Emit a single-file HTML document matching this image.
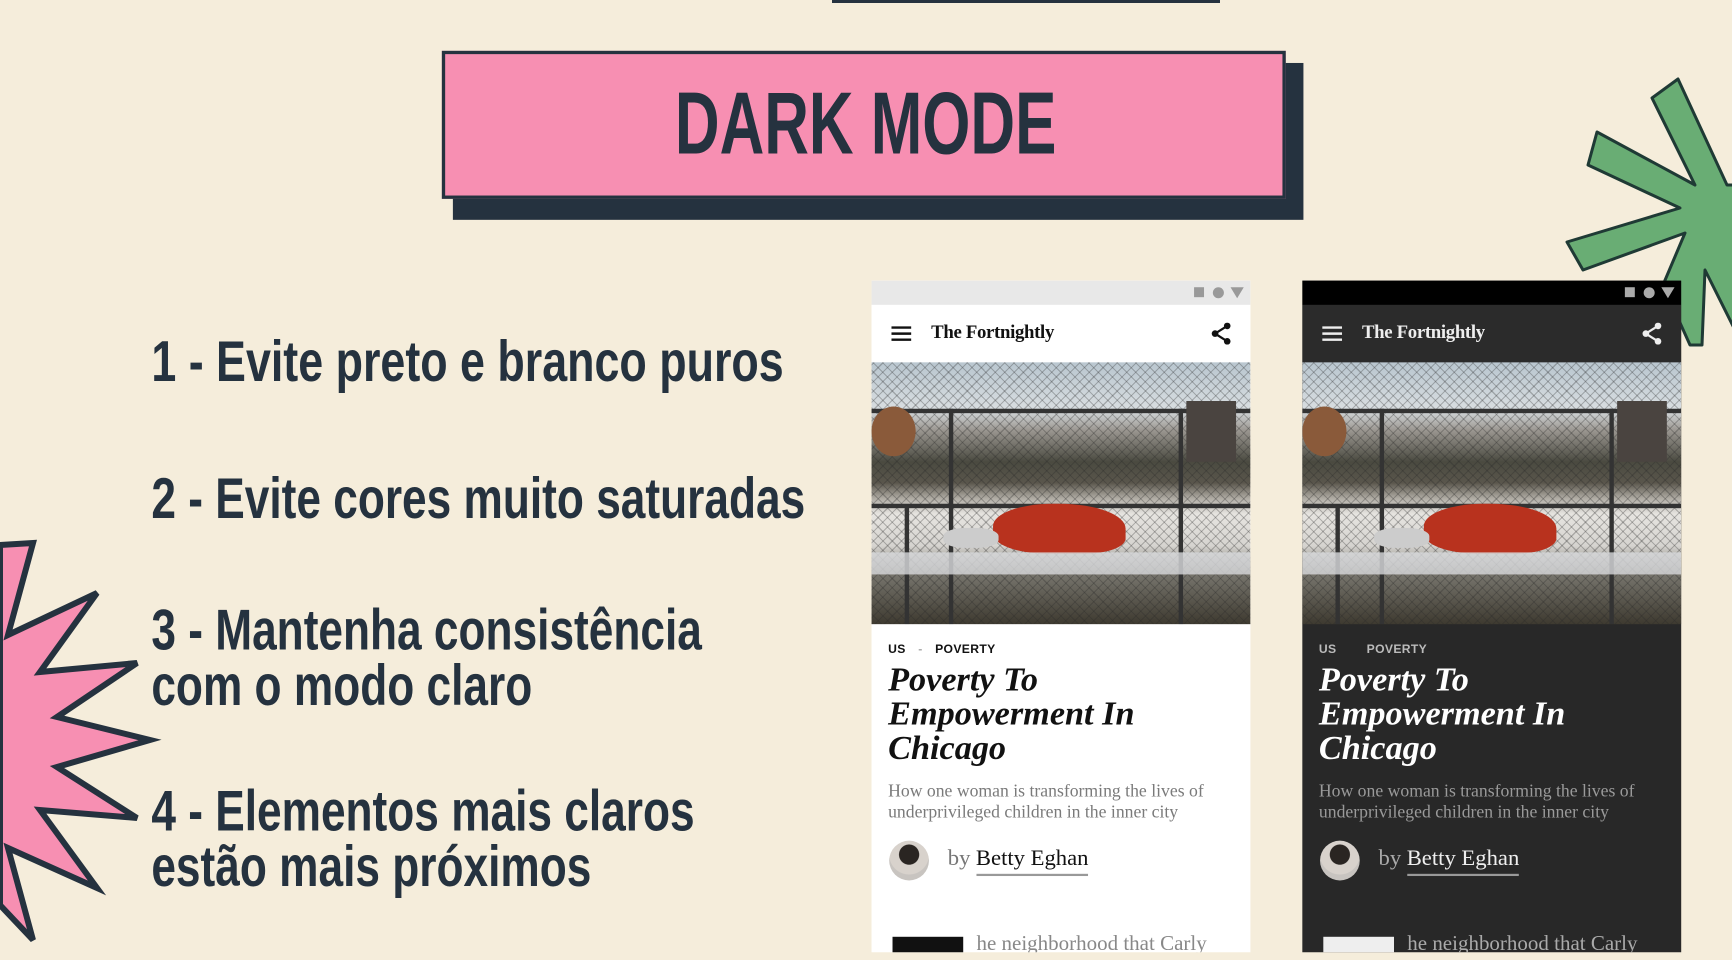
<!DOCTYPE html>
<html><head><meta charset="utf-8"><style>
*{margin:0;padding:0;box-sizing:border-box}
html,body{width:1732px;height:960px;overflow:hidden;background:#f5eddb}
#deco{position:absolute;left:0;top:0;z-index:1}
#w{position:absolute;left:0;top:0;width:1568px;height:869px;transform:scale(1.1046,1.1047);transform-origin:0 0;z-index:2}
.cond{font-family:"Liberation Sans Narrow","Liberation Sans",sans-serif;font-weight:bold;color:#25323f;white-space:nowrap;position:absolute;transform-origin:0 0}
.tshadow{position:absolute;left:410px;top:57px;width:770px;height:142px;background:#25323f}
.tbox{position:absolute;left:400px;top:46px;width:764px;height:134px;background:#f78fb2;border:3px solid #25323f}
.phone{position:absolute;top:254px;width:343px;height:608px;overflow:hidden;font-family:"Liberation Serif",serif}
.sb{height:22px;position:relative}
.sb i{position:absolute;top:6px}
.hd{height:52px;position:relative}
.img{height:237px;position:relative;overflow:hidden;
background:
linear-gradient(180deg,#b9c6cf 0%,#d8dde0 18%,#9a9690 26%,#4a4a40 38%,#5a564c 46%,#b0aca4 52%,#e6e4e0 58%,#d6d4d0 70%,#7a7870 80%,#3e3a30 100%)}
.fence{position:absolute;inset:0;background:
repeating-linear-gradient(45deg,rgba(40,40,40,.28) 0 1px,transparent 1px 6px),
repeating-linear-gradient(-45deg,rgba(40,40,40,.28) 0 1px,transparent 1px 6px)}
.tag{position:absolute;top:328px;left:15px;font:bold 11px "Liberation Sans",sans-serif;letter-spacing:.3px}
.tl{position:absolute;top:345px;left:15px;font:bold italic 31px/31px "Liberation Serif",serif}
.sub{position:absolute;top:453px;left:15px;font:16px/19px "Liberation Serif",serif;color:#7a7a7a;white-space:nowrap}
.av{position:absolute;left:16px;top:507px;width:36px;height:36px;border-radius:50%;background:radial-gradient(circle at 50% 35%,#2a2522 0 30%,#d8d2cc 32% 60%,#c8c4c0 62%)}
.by{position:absolute;left:69px;top:512px;font:20.5px "Liberation Serif",serif;white-space:nowrap}
.by span{border-bottom:2px solid #999;padding-bottom:3px}
.blk{position:absolute;left:19px;top:594px;width:64px;height:20px;background:#111}
.more{position:absolute;left:95px;top:590px;font:19px "Liberation Serif",serif;color:#888;white-space:nowrap}
</style></head><body>
<svg id="deco" width="1732" height="960">
<path d="M0,545 L33,543 L8,635 L97,593 L40,672 L137,663 L57,717 L150,740 L57,767 L137,818 L40,810 L97,888 L8,848 L33,940 L0,905 Z" fill="#f78fb2" stroke="#25323f" stroke-width="6" stroke-linejoin="miter"/>
<path d="M1652,98 L1678,79 L1727,185 L1740,185 L1740,340 L1705,270 L1702,345 L1690,345 L1663,285 L1685,233 L1583,270 L1567,242 L1680,208 L1588,165 L1597,132 L1695,185 Z" fill="#69ad74" stroke="#1f3a35" stroke-width="3" stroke-linejoin="round"/>
<rect x="832" y="0" width="388" height="3" fill="#25323f"/>
</svg>
<div id="w">
<div class="tshadow"></div>
<div class="tbox"></div>
<div class="cond" style="left:611px;top:72px;font-size:80px;line-height:80px;transform:scaleX(.70)">DARK MODE</div>

<div class="cond" style="left:137px;top:300px;font-size:52px;line-height:56px;transform:scaleX(.78)">1 - Evite preto e branco puros</div>
<div class="cond" style="left:137px;top:424px;font-size:52px;line-height:56px;transform:scaleX(.77)">2 - Evite cores muito saturadas</div>
<div class="cond" style="left:137px;top:546px;font-size:52px;line-height:50px;transform:scaleX(.77)">3 - Mantenha consistência<br>com o modo claro</div>
<div class="cond" style="left:137px;top:710px;font-size:52px;line-height:50px;transform:scaleX(.77)">4 - Elementos mais claros<br>estão mais próximos</div>

<!-- light phone -->
<div class="phone" style="left:789px;background:#fff;color:#111">
 <div class="sb" style="background:#e8e8e8"><i style="left:292px;width:9px;height:9px;background:#999"></i><i style="left:309px;width:10px;height:10px;border-radius:50%;background:#999"></i><i style="left:325px;width:0;height:0;border-left:6px solid transparent;border-right:6px solid transparent;border-top:10px solid #999"></i></div>
 <div class="hd" style="background:#fff">
  <svg style="position:absolute;left:18px;top:19px" width="18" height="14"><path d="M0,1.5H18M0,7H18M0,12.5H18" stroke="#111" stroke-width="2.2"/></svg>
  <div style="position:absolute;left:54px;top:15px;font:bold 17px 'Liberation Serif',serif;letter-spacing:-.3px">The Fortnightly</div>
  <svg style="position:absolute;left:307px;top:16px" width="20" height="20"><path d="M15,3 L4,10 L15,17" stroke="#111" stroke-width="2" fill="none"/><circle cx="15" cy="3" r="3" fill="#111"/><circle cx="4" cy="10" r="3" fill="#111"/><circle cx="15" cy="17" r="3" fill="#111"/></svg>
 </div>
 <div class="img"><div class="fence"></div>
  <div style="position:absolute;left:0;right:0;top:42px;height:4px;background:#333"></div>
  <div style="position:absolute;left:0;right:0;top:128px;height:4px;background:#333"></div>
  <div style="position:absolute;left:70px;top:42px;width:4px;height:195px;background:#333"></div>
  <div style="position:absolute;left:278px;top:42px;width:4px;height:195px;background:#333"></div>
  <div style="position:absolute;left:30px;top:130px;width:4px;height:107px;background:#333"></div>
  <div style="position:absolute;left:285px;top:35px;width:45px;height:55px;background:#4a4440"></div>
  <div style="position:absolute;left:0;top:40px;width:40px;height:45px;background:#8a5a3a;border-radius:50%"></div>
  <div style="position:absolute;left:110px;top:128px;width:120px;height:45px;background:#b8321e;border-radius:45% 50% 30% 40%"></div>
  <div style="position:absolute;left:65px;top:150px;width:50px;height:18px;background:#ccc;border-radius:40%"></div>
  <div style="position:absolute;left:0;right:0;top:172px;height:20px;background:#d8dadc;opacity:.8"></div>
 </div>
 <div class="tag">US <span style="color:#aaa;margin:0 8px">-</span> POVERTY</div>
 <div class="tl">Poverty To<br>Empowerment In<br>Chicago</div>
 <div class="sub">How one woman is transforming the lives of<br>underprivileged children in the inner city</div>
 <div class="av"></div>
 <div class="by"><span style="color:#777;border:0;margin-right:5px">by</span><span>Betty Eghan</span></div>
 <div class="blk"></div><div class="more">he neighborhood that Carly</div>
</div>

<!-- dark phone -->
<div class="phone" style="left:1179px;background:#282828;color:#fff">
 <div class="sb" style="background:#000"><i style="left:292px;width:9px;height:9px;background:#aaa"></i><i style="left:309px;width:10px;height:10px;border-radius:50%;background:#aaa"></i><i style="left:325px;width:0;height:0;border-left:6px solid transparent;border-right:6px solid transparent;border-top:10px solid #aaa"></i></div>
 <div class="hd" style="background:#2b2b2b">
  <svg style="position:absolute;left:18px;top:19px" width="18" height="14"><path d="M0,1.5H18M0,7H18M0,12.5H18" stroke="#eee" stroke-width="2.2"/></svg>
  <div style="position:absolute;left:54px;top:15px;font:bold 17px 'Liberation Serif',serif;letter-spacing:-.3px;color:#eee">The Fortnightly</div>
  <svg style="position:absolute;left:307px;top:16px" width="20" height="20"><path d="M15,3 L4,10 L15,17" stroke="#eee" stroke-width="2" fill="none"/><circle cx="15" cy="3" r="3" fill="#eee"/><circle cx="4" cy="10" r="3" fill="#eee"/><circle cx="15" cy="17" r="3" fill="#eee"/></svg>
 </div>
 <div class="img"><div class="fence"></div>
  <div style="position:absolute;left:0;right:0;top:42px;height:4px;background:#333"></div>
  <div style="position:absolute;left:0;right:0;top:128px;height:4px;background:#333"></div>
  <div style="position:absolute;left:70px;top:42px;width:4px;height:195px;background:#333"></div>
  <div style="position:absolute;left:278px;top:42px;width:4px;height:195px;background:#333"></div>
  <div style="position:absolute;left:30px;top:130px;width:4px;height:107px;background:#333"></div>
  <div style="position:absolute;left:285px;top:35px;width:45px;height:55px;background:#4a4440"></div>
  <div style="position:absolute;left:0;top:40px;width:40px;height:45px;background:#8a5a3a;border-radius:50%"></div>
  <div style="position:absolute;left:110px;top:128px;width:120px;height:45px;background:#b8321e;border-radius:45% 50% 30% 40%"></div>
  <div style="position:absolute;left:65px;top:150px;width:50px;height:18px;background:#ccc;border-radius:40%"></div>
  <div style="position:absolute;left:0;right:0;top:172px;height:20px;background:#d8dadc;opacity:.8"></div>
 </div>
 <div class="tag" style="color:#bbb">US <span style="margin:0 12px"></span> POVERTY</div>
 <div class="tl">Poverty To<br>Empowerment In<br>Chicago</div>
 <div class="sub" style="color:#9a9a9a">How one woman is transforming the lives of<br>underprivileged children in the inner city</div>
 <div class="av"></div>
 <div class="by"><span style="color:#aaa;border:0;margin-right:5px">by</span><span style="color:#eee">Betty Eghan</span></div>
 <div class="blk" style="background:#eee"></div><div class="more" style="color:#aaa">he neighborhood that Carly</div>
</div>
</div>
</body></html>
